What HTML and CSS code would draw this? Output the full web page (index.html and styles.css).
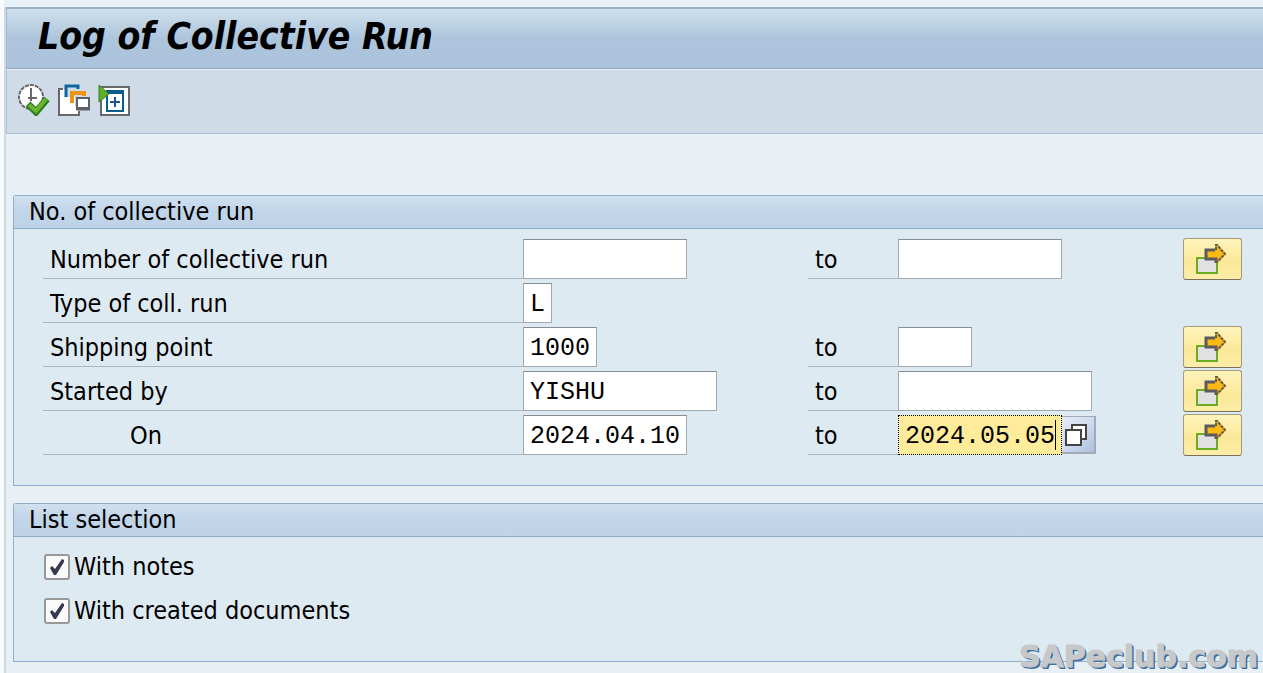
FILE: index.html
```html
<!DOCTYPE html>
<html lang="en">
<head>
<meta charset="utf-8">
<meta name="viewport" content="width=device-width, initial-scale=1">
<title>Log of Collective Run</title>
<link rel="stylesheet" href="styles.css">
</head>
<body>
<svg class="sprite" aria-hidden="true">
  <symbol id="multi" viewBox="0 0 30 30">
    <path d="M1 14h20v15H1z" fill="#e1e1e1" stroke="#6bab25" stroke-width="2"/>
    <path d="M9 5h10V1h3l8 9-8 9h-3v-4h-10z" fill="#fdb913"/>
    <path d="M19 6H10v9h10v4" fill="none" stroke="#5b5b60" stroke-width="3"/>
    <path d="M20 6V1h1l8 9-8 8" fill="none" stroke="#62594c" stroke-width="2" stroke-dasharray="3 1"/>
  </symbol>
</svg>
<div class="window">
  <header class="titlebar"><h1>Log of Collective Run</h1></header>
  <div class="toolbar" role="toolbar" aria-label="Application toolbar">
    <button class="tool" type="button" aria-label="Execute">
      <svg viewBox="0 0 32 32">
        <circle cx="13" cy="13" r="12" fill="#fff" stroke="#66666b" stroke-width="2" stroke-dasharray="4 1"/>
        <path d="M13 4v13M10 14h9" fill="none" stroke="#66666b" stroke-width="2"/>
        <path d="M10 20l8 8 11-13" fill="none" stroke="#2e7d26" stroke-width="7"/>
        <path d="M11 21l7 6 10-12" fill="none" stroke="#68b52c" stroke-width="4"/>
      </svg>
    </button>
    <button class="tool" type="button" aria-label="Get variant">
      <svg viewBox="0 0 32 32">
        <path d="M1 5h7v8h9v10h5v8H1z" fill="#fff"/>
        <path d="M5 5H1v26h20v-4" fill="none" stroke="#67686c" stroke-width="2"/>
        <path d="M8 13V2h12v3" fill="none" stroke="#0f659c" stroke-width="3"/>
        <path d="M14 19V9h12v3" fill="none" stroke="#ef9410" stroke-width="4"/>
        <path d="M19 14h12v10H19z" fill="#fff" stroke="#606166" stroke-width="2"/>
        <path d="M18 25h14" stroke="#606166" stroke-width="3"/>
      </svg>
    </button>
    <button class="tool" type="button" aria-label="Dynamic selections">
      <svg viewBox="0 0 32 32">
        <path d="M3 3h28v28H3z" fill="#fff" stroke="#67686c" stroke-width="2"/>
        <path d="M9 8h16v19H9z" fill="#fff" stroke="#0b5c8e" stroke-width="2"/>
        <path d="M8 8h18" stroke="#0b5c8e" stroke-width="4"/>
        <path d="M17 13v10M12 18h10" stroke="#1f5490" stroke-width="2"/>
        <path d="M1 1l10 9L1 18z" fill="#5fae28" stroke="#368024"/>
      </svg>
    </button>
  </div>

  <main class="content">
    <section class="panel" aria-labelledby="run-title">
      <h2 id="run-title">No. of collective run</h2>
      <div class="rows">
        <div class="row">
          <label class="name" for="num">Number of collective run</label>
          <span class="cell"><input class="field w10" id="num" type="text"></span>
          <label class="name to" for="num2">to</label>
          <span class="cell"><input class="field w10" id="num2" type="text"></span>
          <button class="more" type="button" aria-label="Multiple selection"><svg><use href="#multi"/></svg></button>
        </div>
        <div class="row">
          <label class="name" for="type">Type of coll. run</label>
          <span class="cell"><input class="field w1" id="type" type="text" value="L"></span>
        </div>
        <div class="row">
          <label class="name" for="ship">Shipping point</label>
          <span class="cell"><input class="field w4" id="ship" type="text" value="1000"></span>
          <label class="name to" for="ship2">to</label>
          <span class="cell"><input class="field w4" id="ship2" type="text"></span>
          <button class="more" type="button" aria-label="Multiple selection"><svg><use href="#multi"/></svg></button>
        </div>
        <div class="row">
          <label class="name" for="user">Started by</label>
          <span class="cell"><input class="field w12" id="user" type="text" value="YISHU"></span>
          <label class="name to" for="user2">to</label>
          <span class="cell"><input class="field w12" id="user2" type="text"></span>
          <button class="more" type="button" aria-label="Multiple selection"><svg><use href="#multi"/></svg></button>
        </div>
        <div class="row">
          <label class="name indent" for="date">On</label>
          <span class="cell"><input class="field w10" id="date" type="text" value="2024.04.10"></span>
          <label class="name to" for="date2">to</label>
          <span class="cell">
            <span class="active"><input class="field w10 current" id="date2" type="text" value="2024.05.05"><i class="caret"></i></span>
            <button class="help" type="button" aria-label="Value help">
              <svg viewBox="0 0 22 22"><path d="M7 5V1h14v14h-4" fill="#fff" stroke="#444" stroke-width="2"/><path d="M1 6h15v15H1z" fill="#fff" stroke="#444" stroke-width="2"/></svg>
            </button>
          </span>
          <button class="more" type="button" aria-label="Multiple selection"><svg><use href="#multi"/></svg></button>
        </div>
      </div>
    </section>

    <section class="panel" aria-labelledby="list-title">
      <h2 id="list-title">List selection</h2>
      <div class="checks">
        <label class="check"><input type="checkbox" checked>With notes</label>
        <label class="check"><input type="checkbox" checked>With created documents</label>
      </div>
    </section>
  </main>
</div>
<div class="watermark">SAPeclub.com</div>
</body>
</html>
```
FILE: styles.css
```css
* { box-sizing: border-box; }

body {
  margin: 0;
  padding: 7px 0 0 4px;
  min-height: 100vh;
  display: flex;
  overflow-x: hidden;
  background: linear-gradient(90deg, #f8fbfd 4px, #e9f1f8 4px);
  color: #000;
  font-family: Tahoma, "DejaVu Sans Condensed", sans-serif;
  font-size: 25px;
  line-height: 32px;
}

.sprite { position: absolute; width: 0; height: 0; }

.window {
  flex: 1;
  border-left: 2px solid #cdd9e4;
  background: #e8f0f6;
}

.titlebar {
  height: 62px;
  padding: 8px 31px;
  border-top: 2px solid #98afc5;
  border-left: 1px solid #a3b9cc;
  border-bottom: 1px solid #92acc5;
  background: linear-gradient(#cfe0ec, #adc5dc 50%, #abc3db);
}

h1 {
  margin: 0;
  font-size: 37px;
  line-height: 40px;
  font-weight: bold;
  font-style: italic;
}

.toolbar {
  display: flex;
  gap: 8px;
  height: 65px;
  padding: 14px 11px;
  border-top: 1px solid #e5edf4;
  border-left: 1px solid #b0c1d0;
  border-bottom: 1px solid #a8bfd5;
  background: #cfdce7;
}

.tool {
  width: 32px;
  height: 32px;
  padding: 0;
  border: 0;
  background: none;
}

.tool svg { display: block; width: 32px; height: 32px; }

.content {
  display: flex;
  flex-direction: column;
  gap: 17px;
  padding: 61px 0 11px 7px;
}

.panel {
  border: 1px solid #8faecb;
  border-right: 0;
  border-top-left-radius: 3px;
  background: #deeaf2;
}

h2 {
  margin: 0;
  padding: 0 15px;
  border-bottom: 1px solid #8faac5;
  background: linear-gradient(#cfe0ef, #c1d5e9 50%, #bfd3e8);
  font-size: 25px;
  line-height: 32px;
  font-weight: normal;
}

.rows { padding: 8px 21px 28px 29px; }

.row {
  display: grid;
  grid-template-columns: 480fr 285fr 90fr 285fr 59px;
  height: 44px;
}

.name {
  height: 42px;
  padding: 6px 7px 0;
  border-bottom: 1px solid #a9b7c3;
  line-height: 34px;
  white-space: nowrap;
}

.indent { padding-left: 87px; }

.cell { display: flex; padding-top: 2px; }

.field {
  height: 40px;
  padding: 2px 6px 0;
  border: 1px solid #a3a8b0;
  border-top-color: #888d96;
  border-radius: 0;
  outline: 0;
  background: #fff;
  color: #000;
  font-family: "Liberation Mono", monospace;
  font-size: 25px;
}

.w1 { width: 29px; }
.w4 { width: 74px; }
.w10 { width: 164px; }
.w12 { width: 194px; }

.current { border: 1px dotted #000; background: #feec9b; }

.active { position: relative; display: flex; }

.caret {
  position: absolute;
  right: 6px;
  top: 5px;
  width: 1px;
  height: 30px;
  background: #000;
}

.help {
  display: grid;
  place-items: center;
  width: 34px;
  height: 38px;
  margin-top: 1px;
  padding: 0 4px 0 0;
  border: solid #a2a9b8;
  border-width: 1px 2px 2px 0;
  background: linear-gradient(135deg, #e5ebf6, #cfdbf0 50%, #aebfdd);
}

.help svg { width: 22px; height: 22px; }

.more {
  display: grid;
  place-items: center;
  width: 59px;
  height: 42px;
  margin-top: 1px;
  padding: 0 3px 0 0;
  border: 1px solid #a69c78;
  border-bottom-color: #77705b;
  border-radius: 3px;
  background: linear-gradient(#fff3bb, #fbe898 60%, #fdeda8);
}

.more svg { width: 30px; height: 30px; }

.checks { padding: 8px 30px 28px; }

.check {
  display: flex;
  align-items: center;
  gap: 4px;
  height: 44px;
}

.check input {
  appearance: none;
  width: 26px;
  height: 26px;
  margin: 0;
  border: 2px solid #989898;
  border-radius: 3px;
  background: #fafafa;
}

.check input:checked {
  background: #fafafa url("data:image/svg+xml,%3Csvg xmlns='http://www.w3.org/2000/svg' viewBox='0 0 22 22'%3E%3Cpath d='M4 12l2-2 3 3 7-10 2 1v2l-8 13H8z' fill='%23373852'/%3E%3C/svg%3E");
}

.watermark {
  position: absolute;
  right: 5px;
  bottom: 0;
  color: #c6c8ca;
  font-family: "DejaVu Sans", sans-serif;
  font-size: 30px;
  font-weight: bold;
  line-height: 32px;
  -webkit-text-stroke: 1px #c6c8ca;
  text-shadow: 1px 1px #40709f, 2px 2px #40709f;
}
```
